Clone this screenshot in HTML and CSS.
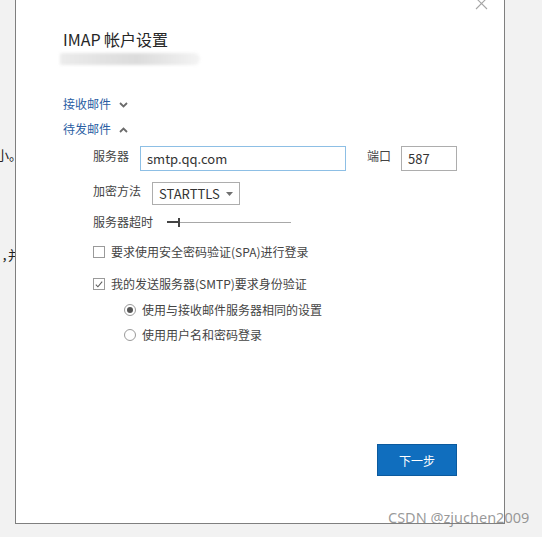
FILE: index.html
```html
<!DOCTYPE html>
<html lang="zh-CN">
<head>
<meta charset="utf-8">
<title>IMAP 帐户设置</title>
<link rel="stylesheet" href="styles.css">
</head>
<body>
<div class="desktop">
  <span class="doc-text doc-a">大小。</span>
  <span class="doc-text doc-b">，并</span>

  <div class="dialog">
    <svg class="close" width="13" height="13" viewBox="0 0 13 13"><path d="M1 1 L12 12 M12 1 L1 12" stroke="#a6a6a6" stroke-width="1.1" fill="none"/></svg>
    <h1 class="title">IMAP 帐户设置</h1>
    <div class="blurred"></div>

    <div class="section-link first">接收邮件
      <svg class="chev" width="9" height="6" viewBox="0 0 9 6"><path d="M1 1 L4.5 4.5 L8 1" stroke="#6b6b6b" stroke-width="1.8" fill="none"/></svg>
    </div>
    <div class="section-link second">待发邮件
      <svg class="chev" width="9" height="6" viewBox="0 0 9 6"><path d="M1 5 L4.5 1.5 L8 5" stroke="#6b6b6b" stroke-width="1.8" fill="none"/></svg>
    </div>

    <div class="form">
      <div class="row row-server">
        <span class="label">服务器</span>
        <div class="input input-server">smtp.qq.com</div>
        <span class="label label-port">端口</span>
        <div class="input input-port">587</div>
      </div>
      <div class="row row-enc">
        <span class="label">加密方法</span>
        <div class="select">STARTTLS
          <svg class="sel-arrow" width="7" height="4" viewBox="0 0 7 4"><path d="M0 0 L7 0 L3.5 4 Z" fill="#707070"/></svg>
        </div>
      </div>
      <div class="row row-timeout">
        <span class="label">服务器超时</span>
        <div class="slider">
          <div class="slider-fill"></div>
          <div class="slider-thumb"></div>
          <div class="slider-track"></div>
        </div>
      </div>
      <div class="row row-cb1">
        <span class="checkbox"></span>
        <span class="opt">要求使用安全密码验证(SPA)进行登录</span>
      </div>
      <div class="row row-cb2">
        <span class="checkbox">
          <svg width="11" height="11" viewBox="0 0 11 11"><path d="M2 5.6 L4.3 8 L9 2.4" stroke="#5e5e5e" stroke-width="1.2" fill="none"/></svg>
        </span>
        <span class="opt">我的发送服务器(SMTP)要求身份验证</span>
      </div>
      <div class="row row-r1">
        <span class="radio on"></span>
        <span class="opt">使用与接收邮件服务器相同的设置</span>
      </div>
      <div class="row row-r2">
        <span class="radio"></span>
        <span class="opt">使用用户名和密码登录</span>
      </div>
    </div>

    <div class="footer">
      <button class="next">下一步</button>
    </div>
  </div>

  <div class="watermark">CSDN @zjuchen2009</div>
</div>
</body>
</html>
```

FILE: styles.css
```css
* { box-sizing: border-box; }
html, body { margin: 0; padding: 0; }
body {
  background: #f2f2f2;
  font-family: "Noto Sans CJK SC", "Noto Sans", sans-serif;
}
.desktop {
  position: relative;
  width: 542px;
  height: 537px;
  overflow: hidden;
  background: #f2f2f2;
}
.doc-text {
  position: absolute;
  font-size: 13px;
  line-height: 18px;
  color: #222;
  white-space: nowrap;
}
.doc-a { right: 520px; top: 146px; }
.doc-b { right: 521px; top: 246px; font-feature-settings: "halt"; }

.dialog {
  position: absolute;
  left: 15px;
  top: -1px;
  width: 490px;
  height: 525px;
  background: #fff;
  border: 1px solid #7f7f7f;
  display: flex;
  flex-direction: column;
  color: #444;
}
.close {
  position: absolute;
  left: 459px;
  top: -3px;
}
.title {
  margin: 28px 0 0 47px;
  font-size: 16px;
  line-height: 22px;
  font-weight: 400;
  color: #262626;
}
.blurred {
  margin: 3px 0 0 44px;
  width: 140px;
  height: 12px;
  background: linear-gradient(90deg, #ececec 0%, #e2e2e2 30%, #dcdcdc 55%, #e6e6e6 75%, #f4f4f4 100%);
  border-radius: 2px 8px 8px 2px;
  filter: blur(1.5px);
}
.section-link {
  margin-left: 47px;
  font-size: 12px;
  line-height: 18px;
  height: 18px;
  color: #2a5ea3;
  display: flex;
  align-items: center;
}
.section-link.first { margin-top: 30px; }
.section-link.second { margin-top: 7px; }
.chev { margin-left: 8px; margin-top: 1px; }

.form {
  margin-left: 77px;
  display: flex;
  flex-direction: column;
  font-size: 12px;
  color: #444;
}
.row { display: flex; align-items: center; }
.label { line-height: 18px; white-space: nowrap; }
.row-server { margin-top: 8px; height: 25px; align-items: flex-start; }
.row-server .label { margin-top: 1px; }
.input {
  height: 25px;
  border: 1px solid #adadad;
  font-size: 13px;
  line-height: 23px;
  padding-left: 6px;
  color: #333;
}
.input-server {
  width: 206px;
  margin-left: 11px;
  border-color: #8dbfe5;
}
.label-port { margin-left: 21px; }
.input-port { width: 56px; margin-left: 10px; }

.row-enc { margin-top: 11px; height: 23px; align-items: flex-start; }
.select {
  margin-left: 11px;
  width: 88px;
  height: 23px;
  border: 1px solid #adadad;
  font-size: 13px;
  line-height: 21px;
  padding-left: 6px;
  color: #333;
  display: flex;
  align-items: center;
}
.sel-arrow { margin-left: auto; margin-right: 6px; }

.row-timeout { margin-top: 8px; height: 18px; }
.slider {
  margin-left: 14px;
  width: 124px;
  height: 10px;
  display: flex;
  align-items: center;
}
.slider-fill { width: 11px; height: 2px; background: #444; }
.slider-thumb { width: 2px; height: 9px; background: #444; }
.slider-track { flex: 1; height: 1px; background: #a8a8a8; }

.row-cb1 { margin-top: 12px; height: 18px; }
.row-cb2 { margin-top: 14px; height: 18px; }
.checkbox {
  width: 12px;
  height: 12px;
  border: 1px solid #9a9a9a;
  background: #fff;
  display: flex;
  align-items: center;
  justify-content: center;
  flex: none;
}
.opt { margin-left: 6px; line-height: 18px; white-space: nowrap; }

.row-r1 { margin-top: 8px; height: 18px; margin-left: 31px; }
.row-r2 { margin-top: 7px; height: 18px; margin-left: 31px; }
.radio {
  width: 12px;
  height: 12px;
  border: 1px solid #9a9a9a;
  border-radius: 50%;
  background: #fff;
  display: flex;
  align-items: center;
  justify-content: center;
  flex: none;
}
.radio.on::after {
  content: "";
  width: 6px;
  height: 6px;
  border-radius: 50%;
  background: #555;
}

.footer {
  margin-top: 100px;
  display: flex;
  justify-content: flex-end;
  padding-right: 47px;
}
.next {
  width: 80px;
  height: 32px;
  background: #106ebe;
  border: 1px solid #0b5a9e;
  color: #fff;
  font-family: "Noto Sans CJK SC", sans-serif;
  font-size: 12px;
  padding: 0;
}

.watermark {
  position: absolute;
  left: 388px;
  top: 507px;
  font-family: "Noto Sans", sans-serif;
  font-size: 14.5px;
  line-height: 20px;
  color: rgba(120, 120, 120, 0.75);
  white-space: nowrap;
}
```
